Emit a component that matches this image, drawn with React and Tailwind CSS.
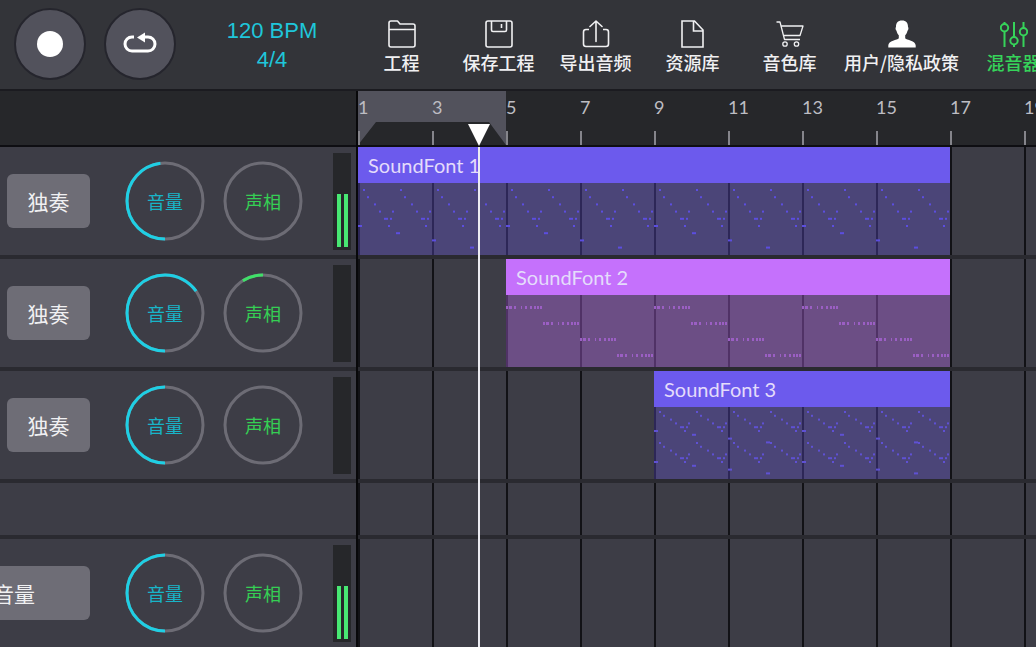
import clsx from "clsx";

const BARS = [1, 3, 5, 7, 9, 11, 13, 15, 17, 19];

// One two-bar figure: [x, step, width]
const MELODY = [
    [5, 0, 2], [9, 1, 2], [16, 2, 2], [21, 3, 2], [26, 4, 4], [32, 4, 2], [30, 5, 2], [34, 3, 2],
    [42, 0, 2], [46, 1, 2], [53, 2, 2], [58, 3, 2], [63, 4, 4], [69, 4, 2], [67, 5, 2], [71, 3, 2],
];

const CHORD = [[0, 2], [3, 3], [8, 2], [15, 1], [19, 2], [24, 2], [28, 2], [31, 2], [34, 2]];

function melodyNotes(cells, top, stepHeight) {
    return Array.from({ length: cells }).flatMap((_, cell) => {
        const low = cell % 2 ? 2 : 0;
        return [[0, 5 + low, 4], [38, 6 + low, 4], ...MELODY].map(([x, step, w]) => ({
            x: cell * 74 + x,
            y: top + step * stepHeight,
            w,
        }));
    });
}

function chordNotes(cells) {
    return Array.from({ length: cells * 2 }).flatMap((_, i) =>
        CHORD.map(([x, w]) => ({ x: i * 37 + x, y: 11 + (i % 4) * 16, w, h: 3 }))
    );
}

const tracks = [
    {
        id: 1,
        volume: 173,
        level: true,
        clip: {
            title: "SoundFont 1",
            place: "col-start-1 col-end-9",
            head: "bg-[#6c5aed]",
            body: "bg-[#6c5aed]/30",
            note: "#5c4ee0",
            cells: 8,
            notes: melodyNotes(8, 6, 7.2),
        },
    },
    {
        id: 2,
        volume: 235,
        pan: 32,
        clip: {
            title: "SoundFont 2",
            place: "col-start-3 col-end-9",
            head: "bg-[#c571fc]",
            body: "bg-[#c571fc]/35",
            note: "#9b5fc4",
            cells: 6,
            notes: chordNotes(6),
        },
    },
    {
        id: 3,
        volume: 180,
        clip: {
            title: "SoundFont 3",
            place: "col-start-5 col-end-9",
            head: "bg-[#6c5aed]",
            body: "bg-[#6c5aed]/30",
            note: "#5f51d4",
            cells: 4,
            notes: [...melodyNotes(4, 4, 3.8), ...melodyNotes(4, 35, 3.8)],
        },
    },
];

const tools = [
    { label: "工程", icon: <FolderIcon /> },
    { label: "保存工程", icon: <SaveIcon /> },
    { label: "导出音频", icon: <ExportIcon /> },
    { label: "资源库", icon: <FileIcon /> },
    { label: "音色库", icon: <CartIcon /> },
    { label: "用户/隐私政策", icon: <UserIcon />, wide: true },
    { label: "混音器", icon: <MixerIcon />, active: true },
];

export default function App() {
    return (
        <div className="flex h-screen flex-col overflow-hidden bg-[#3d3d46] font-['Noto_Sans_CJK_SC',sans-serif] text-white">
            <Toolbar />
            <main className="flex min-h-0 flex-1">
                {/* Track controls */}
                <section className="flex w-[358px] shrink-0 flex-col border-r-2 border-[#08080a]">
                    <div className="h-14 shrink-0 border-b-2 border-[#0e0e12] bg-[#26272a]" />
                    {tracks.map((track) => (
                        <TrackControls key={track.id} {...track} />
                    ))}
                    <div className="h-14 shrink-0 border-b-4 border-[#2a2a30]" />
                    <TrackControls id="master" volume={180} level master />
                </section>

                {/* Timeline */}
                <section className="relative min-w-0 flex-1 overflow-hidden">
                    <Ruler />
                    <div className="h-full bg-[repeating-linear-gradient(to_right,#121216_0px,#121216_2px,transparent_2px,transparent_74px)]">
                        {tracks.map(({ id, clip }) => (
                            <div key={id} className="grid h-28 grid-cols-[repeat(9,74px)] border-b-4 border-[#2a2a30]">
                                <Clip {...clip} />
                            </div>
                        ))}
                        <div className="h-14 border-b-4 border-[#2a2a30]" />
                    </div>
                    <Playhead />
                </section>
            </main>
        </div>
    );
}

function Toolbar() {
    return (
        <header className="flex h-[91px] shrink-0 border-b-2 border-[#1b1b20] bg-[#333439]">
            <div className="flex shrink-0 items-start gap-[18px] pt-2 pl-3.5">
                <RoundButton label="录音">
                    <span className="size-[26px] rounded-full bg-white" />
                </RoundButton>
                <RoundButton label="循环">
                    <LoopIcon />
                </RoundButton>
            </div>
            <button type="button" className="ml-10 flex w-28 shrink-0 flex-col items-center pt-4 font-['Liberation_Sans',sans-serif] text-[22px] leading-[29px] text-[#1fc6da]">
                <span>120 BPM</span>
                <span>4/4</span>
            </button>
            <nav className="ml-[25px] flex shrink-0">
                {tools.map(({ label, icon, wide, active }) => (
                    <button
                        key={label}
                        type="button"
                        className={clsx(
                            "flex shrink-0 flex-col items-center gap-1 pt-5 text-[18px] leading-5 font-medium whitespace-nowrap",
                            wide ? "w-[127px]" : "w-[97px]",
                            active ? "text-[#36d35a]" : "text-[#f0f0f2]"
                        )}
                    >
                        {icon}
                        <span>{label}</span>
                    </button>
                ))}
            </nav>
        </header>
    );
}

function RoundButton({ label, children }) {
    return (
        <button type="button" aria-label={label} className="grid size-[72px] place-items-center rounded-full border-2 border-[#25252d] bg-[#52525c]">
            {children}
        </button>
    );
}

function TrackControls({ id, volume, pan = 0, level, master }) {
    return (
        <div className="flex h-28 shrink-0 items-center justify-end border-b-4 border-[#2a2a30] pr-[5px]">
            <button
                type="button"
                className={clsx(
                    "mr-[35px] h-[54px] shrink-0 rounded-md bg-[#6e6d76] text-[21px] leading-6 text-[#f0f0f2]",
                    master ? "w-[152px]" : "w-[83px]"
                )}
            >
                {master ? "音量" : "独奏"}
            </button>
            <div className="flex shrink-0 gap-[18px]">
                <Knob id={`volume-${id}`} label="音量" start={0} sweep={volume} className="text-[#1fcfe4]" textClass="text-[#18b4c8]" />
                <Knob id={`pan-${id}`} label="声相" start={180 - pan} sweep={pan} className="text-[#3fe068]" textClass="text-[#35cf54]" />
            </div>
            <div className="ml-[30px] flex h-[97px] w-[18px] shrink-0 items-end justify-center gap-[3px] bg-[#26272a] pb-[3px]">
                {level && (
                    <>
                        <span className="h-[53px] w-1 bg-[#48e873]" />
                        <span className="h-[53px] w-1 bg-[#48e873]" />
                    </>
                )}
            </div>
        </div>
    );
}

// The dial runs clockwise from six o'clock
function Knob({ id, label, start, sweep, className, textClass }) {
    return (
        <label htmlFor={id} className={clsx("relative grid size-20 place-items-center", className)}>
            <svg viewBox="0 0 80 80" className="col-start-1 row-start-1 size-20" fill="none" aria-hidden="true">
                <circle cx="40" cy="40" r="38" stroke="#6d6c75" strokeWidth="3" />
                {sweep > 0 && (
                    <circle
                        cx="40"
                        cy="40"
                        r="38"
                        pathLength="360"
                        stroke="currentColor"
                        strokeWidth="3"
                        strokeDasharray={`${sweep} ${360 - sweep}`}
                        transform={`rotate(${90 + start} 40 40)`}
                    />
                )}
            </svg>
            <span className={clsx("col-start-1 row-start-1 text-[18px] leading-5", textClass)}>{label}</span>
            <input id={id} type="range" min="0" max="360" defaultValue={sweep} className="sr-only" />
        </label>
    );
}

function Ruler() {
    return (
        <div className="relative flex h-14 border-b-2 border-[#0e0e12] bg-[#26272a] font-[Lato,sans-serif] text-[18px] leading-8 text-[#bdbdc3]">
            {/* Loop range */}
            <svg className="absolute top-0 left-0 h-[54px] w-[148px]" viewBox="0 0 148 54" aria-hidden="true">
                <path d="M0 0H148V54L131 31H18L0 54Z" fill="#52525c" />
            </svg>
            {BARS.map((bar) => (
                <div key={bar} className="relative flex w-[74px] shrink-0 flex-col justify-between">
                    <span>{bar}</span>
                    <span className="h-3.5 w-0.5 bg-[#85858b]" />
                </div>
            ))}
        </div>
    );
}

function Clip({ title, place, head, body, note, cells, notes }) {
    return (
        <article className={clsx("flex flex-col", place)}>
            <h3 className={clsx("h-9 shrink-0 pl-2.5 font-[Lato,sans-serif] text-[20px] leading-9 text-[#e4dcfb]", head)}>{title}</h3>
            <div className={clsx("flex-1", body)}>
                <svg width={cells * 74} height="72" fill={note} aria-hidden="true">
                    {notes.map(({ x, y, w, h = 2 }, i) => (
                        <rect key={i} x={x} y={y} width={w} height={h} />
                    ))}
                </svg>
            </div>
        </article>
    );
}

function Playhead() {
    return (
        <div className="absolute top-8 bottom-0 left-[110px] flex w-[22px] flex-col items-center">
            <svg viewBox="0 0 22 24" className="h-6 w-[22px] shrink-0" fill="#fff" aria-hidden="true">
                <path d="M0 1H22L11 23Z" />
            </svg>
            <span className="w-0.5 flex-1 bg-[#ececf2]" />
        </div>
    );
}

function LoopIcon() {
    return (
        <svg viewBox="0 0 34 24" className="h-6 w-[34px]" fill="none" aria-hidden="true">
            <path d="M11 5H9A7 7 0 0 0 9 19H25A7 7 0 0 0 25 5H20" stroke="#fff" strokeWidth="3" />
            <path d="M14 5.500L22 0.500V10.500Z" fill="#fff" />
        </svg>
    );
}

function Icon({ children, strokeWidth = 1.6 }) {
    return (
        <svg viewBox="0 0 28 28" className="size-7 shrink-0" fill="none" stroke="currentColor" strokeWidth={strokeWidth} strokeLinejoin="round" aria-hidden="true">
            {children}
        </svg>
    );
}

function FolderIcon() {
    return (
        <Icon>
            <path d="M1 3A2 2 0 0 1 3 1H9.500L12 4H25A2 2 0 0 1 27 6V25A2 2 0 0 1 25 27H3A2 2 0 0 1 1 25ZM1 9.500H27" />
        </Icon>
    );
}

function SaveIcon() {
    return (
        <Icon>
            <rect x="1" y="1" width="26" height="26" rx="2" />
            <path d="M6.500 1V10A1.500 1.500 0 0 0 8 11.500H20A1.500 1.500 0 0 0 21.500 10V1M16.500 4V8" />
        </Icon>
    );
}

function ExportIcon() {
    return (
        <Icon>
            <path d="M7 9.500H4A2.500 2.500 0 0 0 1.500 12V24A2.500 2.500 0 0 0 4 26.500H24A2.500 2.500 0 0 0 26.500 24V12A2.500 2.500 0 0 0 24 9.500H21" />
            <path d="M14 21.500V1M8 6.500L14 1L20 6.500" strokeLinecap="round" />
        </Icon>
    );
}

function FileIcon() {
    return (
        <Icon>
            <path d="M3 1H15.500L24 10V27H3ZM14.500 1V11H24" strokeLinejoin="miter" />
        </Icon>
    );
}

function CartIcon() {
    return (
        <Icon strokeWidth={1.3}>
            <path d="M0.500 2H4L8.500 19.500H24M5 6H27L24 15.500H7.500" />
            <circle cx="9" cy="24" r="2.200" />
            <circle cx="20.500" cy="24" r="2.200" />
        </Icon>
    );
}

function UserIcon() {
    return (
        <svg viewBox="0 0 28 28" className="size-7 shrink-0" fill="#fff" aria-hidden="true">
            <path d="M14 0.500C9.800 0.500 7.800 3.200 8 7C7.200 7.400 7.500 10 8.500 10.800C9 13 9.800 14.300 10.800 15.300V18.200C9.500 20 0.300 20.500 0.300 25.500V27.500H27.700V25.500C27.700 20.500 18.500 20 17.200 18.200V15.300C18.200 14.300 19 13 19.500 10.800C20.500 10 20.800 7.400 20 7C20.200 3.200 18.200 0.500 14 0.500Z" />
        </svg>
    );
}

function MixerIcon() {
    return (
        <Icon strokeWidth={2}>
            <path d="M4.500 2V4M4.500 11.500V27M14 2V17M14 24.500V27M23.500 2V8M23.500 15.500V27" />
            <circle cx="4.500" cy="7.700" r="3.700" />
            <circle cx="14" cy="20.700" r="3.700" />
            <circle cx="23.500" cy="11.700" r="3.700" />
        </Icon>
    );
}
